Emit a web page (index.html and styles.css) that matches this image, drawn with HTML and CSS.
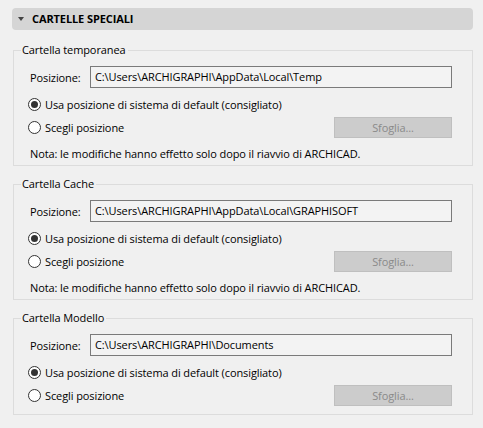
FILE: index.html
```html
<!DOCTYPE html>
<html lang="it">
<head>
<meta charset="utf-8">
<title>Cartelle speciali</title>
<link rel="stylesheet" href="styles.css">
</head>
<body>
<div class="panel">
  <div class="header"><span class="caret"></span><span class="header-title">CARTELLE SPECIALI</span></div>
  <div class="groups">
    <section class="group">
      <div class="group-title">Cartella temporanea</div>
      <div class="group-body">
        <div class="field"><span class="field-label">Posizione:</span><div class="input">C:\Users\ARCHIGRAPHI\AppData\Local\Temp</div></div>
        <div class="radio-row"><span class="radio checked"></span><span>Usa posizione di sistema di default (consigliato)</span></div>
        <div class="radio-row choose"><span class="radio"></span><span>Scegli posizione</span><span class="button">Sfoglia...</span></div>
        <div class="note">Nota: le modifiche hanno effetto solo dopo il riavvio di ARCHICAD.</div>
      </div>
    </section>
    <section class="group">
      <div class="group-title">Cartella Cache</div>
      <div class="group-body">
        <div class="field"><span class="field-label">Posizione:</span><div class="input">C:\Users\ARCHIGRAPHI\AppData\Local\GRAPHISOFT</div></div>
        <div class="radio-row"><span class="radio checked"></span><span>Usa posizione di sistema di default (consigliato)</span></div>
        <div class="radio-row choose"><span class="radio"></span><span>Scegli posizione</span><span class="button">Sfoglia...</span></div>
        <div class="note">Nota: le modifiche hanno effetto solo dopo il riavvio di ARCHICAD.</div>
      </div>
    </section>
    <section class="group no-note">
      <div class="group-title">Cartella Modello</div>
      <div class="group-body">
        <div class="field"><span class="field-label">Posizione:</span><div class="input">C:\Users\ARCHIGRAPHI\Documents</div></div>
        <div class="radio-row"><span class="radio checked"></span><span>Usa posizione di sistema di default (consigliato)</span></div>
        <div class="radio-row choose"><span class="radio"></span><span>Scegli posizione</span><span class="button">Sfoglia...</span></div>
      </div>
    </section>
  </div>
</div>
</body>
</html>
```
FILE: styles.css
```css
html, body {
  margin: 0;
  background: #f0f0f0;
}
body {
  font-family: "Open Sans", "Noto Sans", sans-serif;
  font-size: 11px;
  letter-spacing: -0.1px;
  color: #000;
}
.panel {
  padding: 8px 10px 0 12px;
}
.header {
  height: 22px;
  border-radius: 4px;
  background: #d5d5d5;
  display: flex;
  align-items: center;
  padding-left: 6px;
  gap: 8px;
}
.caret {
  width: 0;
  height: 0;
  border-left: 3px solid transparent;
  border-right: 3px solid transparent;
  border-top: 4px solid #444;
}
.header-title {
  font-weight: bold;
  line-height: 16px;
}
.groups {
  margin-top: 20px;
  padding-left: 1px;
  display: flex;
  flex-direction: column;
  gap: 18px;
}
.group {
  border: 1px solid #dcdcdc;
  padding: 0 0 3px 0;
}
.group.no-note {
  padding-bottom: 8px;
}
.group-title {
  width: fit-content;
  margin: -9px 0 0 7px;
  padding: 0 2px 0 1px;
  background: #f0f0f0;
  line-height: 16px;
}
.group-body {
  padding: 8px 20px 0 16px;
}
.field {
  display: flex;
  align-items: center;
  height: 22px;
}
.field-label {
  width: 60px;
  flex: none;
}
.input {
  flex: 1;
  height: 22px;
  box-sizing: border-box;
  border: 1px solid #7a7a7a;
  background: #f3f3f3;
  padding-left: 4px;
  line-height: 20px;
  white-space: nowrap;
  overflow: hidden;
}
.radio-row {
  display: flex;
  align-items: center;
  height: 20px;
  margin-top: 6px;
}
.radio-row.choose {
  height: 21px;
  margin-top: 3px;
}
.radio {
  width: 13px;
  height: 13px;
  box-sizing: border-box;
  border: 1px solid #333;
  border-radius: 50%;
  background: #fff;
  margin-left: -2px;
  margin-right: 4px;
  flex: none;
  display: flex;
  align-items: center;
  justify-content: center;
}
.radio.checked::after {
  content: "";
  width: 7px;
  height: 7px;
  border-radius: 50%;
  background: #333;
}
.button {
  margin-left: auto;
  width: 118px;
  height: 21px;
  box-sizing: border-box;
  border: 1px solid #bfbfbf;
  background: #cccccc;
  color: #8a8a8a;
  display: flex;
  align-items: center;
  justify-content: center;
}
.note {
  margin-top: 8px;
  line-height: 16px;
}
```
